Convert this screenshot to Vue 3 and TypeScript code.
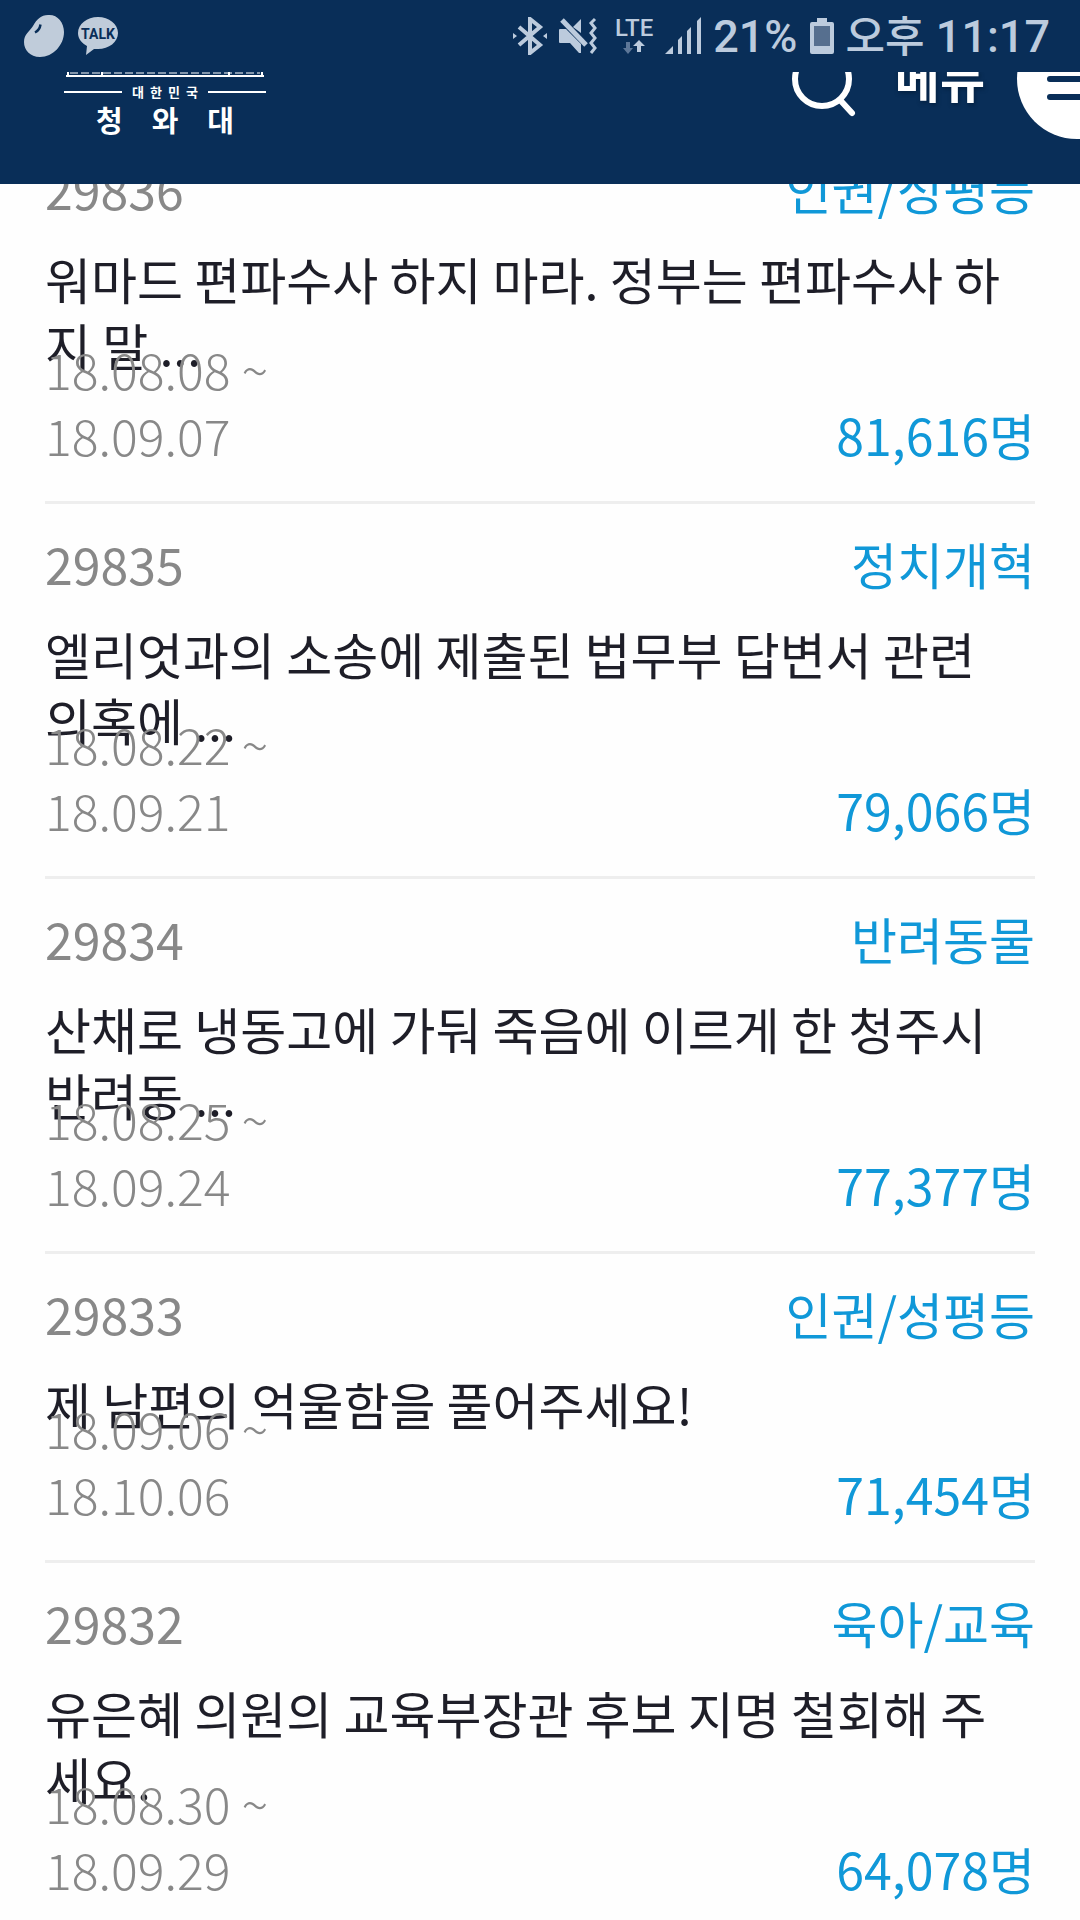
<script setup lang="ts">
interface Petition {
  id: number
  category: string
  title: string
  start: string
  end: string
  count: string
}

const petitions: Petition[] = [
  { id: 29836, category: '인권/성평등', title: '워마드 편파수사 하지 마라. 정부는 편파수사 하지 말 ...', start: '18.08.08', end: '18.09.07', count: '81,616명' },
  { id: 29835, category: '정치개혁', title: '엘리엇과의 소송에 제출된 법무부 답변서 관련 의혹에 ...', start: '18.08.22', end: '18.09.21', count: '79,066명' },
  { id: 29834, category: '반려동물', title: '산채로 냉동고에 가둬 죽음에 이르게 한 청주시 반려동 ...', start: '18.08.25', end: '18.09.24', count: '77,377명' },
  { id: 29833, category: '인권/성평등', title: '제 남편의 억울함을 풀어주세요!', start: '18.09.06', end: '18.10.06', count: '71,454명' },
  { id: 29832, category: '육아/교육', title: '유은혜 의원의 교육부장관 후보 지명 철회해 주세요.', start: '18.08.30', end: '18.09.29', count: '64,078명' },
]

const country: string[] = [...'대한민국']
const house: string[] = [...'청와대']
</script>

<template>
  <div class="page">
    <div class="status">
      <div class="status-left">
        <svg width="40" height="44" viewBox="0 0 40 44" fill="#c0ccda">
          <path d="M24 1C33 0 40 8 40 18C40 31 29 43 16 43C6 43 0 36 0 28C0 20 6 17 9 12C13 5 17 1 24 1Z" />
          <path d="M16.500 10.500C16 14 14 17 11 18.500" fill="none" stroke="#092e58" stroke-width="2.500" />
        </svg>
        <svg width="40" height="38" viewBox="0 0 40 38" fill="#c0ccda">
          <path d="M20 0C31 0 40 7 40 16C40 25 31 32 20 32L16 32L8 38L9 29C3.500 26 0 21.500 0 16C0 7 9 0 20 0Z" />
          <text x="20" y="22" text-anchor="middle" class="talk">TALK</text>
        </svg>
      </div>
      <div class="status-right">
        <svg width="34" height="38" viewBox="0 0 34 38" fill="none" stroke="#bccbdd" stroke-width="4">
          <path d="M6 10L27 28L17 36V2L27 10L6 28" />
          <path d="M0 16L4 19L0 22ZM34 16L30 19L34 22Z" fill="#bccbdd" stroke="none" />
        </svg>
        <svg width="38" height="38" viewBox="0 0 38 38">
          <path d="M1 12H7L22 27V36H20L11 26H1Q0 26 0 25V13Q0 12 1 12ZM14 10L22 2V16Z" fill="#bccbdd" />
          <path d="M3 3L27 28" stroke="#bccbdd" stroke-width="5" />
          <path d="M36 2L32 6L36 11L32 16L36 21L32 26L36 31L32 36" fill="none" stroke="#bccbdd" stroke-width="3" />
        </svg>
        <div class="lte">
          <span>LTE</span>
          <svg width="22" height="14" viewBox="0 0 22 14">
            <path d="M3 2H7V8H10L5 14L0 8H3Z" fill="#5d7798" />
            <path d="M14 12H18V6H22L16 0L10 6H14Z" fill="#bccbdd" />
          </svg>
        </div>
        <svg width="36" height="38" viewBox="0 0 36 38" fill="#bccbdd">
          <path d="M0 37L8 29V37ZM13 37V23L17 19V37ZM22 37V14L26 10V37ZM32 37V4L36 0V37Z" />
        </svg>
        <span class="battery-level">21%</span>
        <svg width="24" height="36" viewBox="0 0 24 36">
          <path d="M7 0H17V4H22Q24 4 24 6V34Q24 36 22 36H2Q0 36 0 34V6Q0 4 2 4H7Z" fill="#bccbdd" />
          <path d="M4 8H20V28H4Z" fill="#566f8f" />
        </svg>
        <span class="clock"><span class="half">오후</span> 11:17</span>
      </div>
    </div>

    <header class="bar">
      <a class="logo" href="#" aria-label="청와대">
        <svg class="roof" width="198" height="5" viewBox="0 0 198 5">
          <path d="M0 4H198" stroke="#fff" stroke-width="2" />
          <path d="M2 0V3M36 0V3M163 0V3M196 0V3" stroke="#fff" stroke-width="2" />
          <path d="M4 1H194" stroke="#fff" stroke-width="1" stroke-dasharray="8 3" />
        </svg>
        <span class="country">
          <i class="rule"></i>
          <span v-for="(c, i) in country" :key="i">{{ c }}</span>
          <i class="rule"></i>
        </span>
        <span class="house">
          <span v-for="(c, i) in house" :key="i">{{ c }}</span>
        </span>
      </a>
      <nav class="tools">
        <button type="button" class="tool" aria-label="검색">
          <svg class="search" width="68" height="68" viewBox="0 0 68 68" fill="none" stroke="#fff" stroke-width="6" stroke-linecap="round">
            <circle cx="34" cy="34" r="27" />
            <path d="M53 56L64 68" />
          </svg>
        </button>
        <button type="button" class="tool menu">
          <span class="menu-label">메뉴</span>
          <svg width="120" height="120" viewBox="0 0 120 120">
            <circle cx="60" cy="60" r="60" fill="#fff" />
            <path d="M33 42H87M33 60H87M33 78H87" stroke="#092e58" stroke-width="6" stroke-linecap="round" />
          </svg>
        </button>
      </nav>
    </header>

    <main class="content">
      <ul class="list">
        <li v-for="p in petitions" :key="p.id" class="item">
          <div class="meta">
            <span class="number">{{ p.id }}</span>
            <span class="blue">{{ p.category }}</span>
          </div>
          <a class="title" href="#">{{ p.title }}</a>
          <div class="foot">
            <span class="dates">{{ p.start }} ~ {{ p.end }}</span>
            <span class="blue">{{ p.count }}</span>
          </div>
        </li>
      </ul>
    </main>
  </div>
</template>

<style>
body {
  background: #fefefe;
}
</style>

<style scoped>
.page {
  height: 100vh;
  overflow: hidden;
  display: flex;
  flex-direction: column;
  background: #fefefe;
  font-family: "Noto Sans CJK KR", sans-serif;
}
.status,
.bar {
  flex: none;
  display: flex;
  justify-content: space-between;
  background: #092e58;
}
.status {
  height: 72px;
  padding: 0 30px 0 24px;
  align-items: center;
  color: #bccbdd;
  font: 500 45px/72px Roboto, "Noto Sans CJK KR", sans-serif;
}
.status-left,
.status-right {
  display: flex;
  align-items: center;
}
.status-left {
  gap: 14px;
}
.status-right {
  gap: 12px;
}
.clock,
.battery-level {
  padding-top: 2px;
}
.half {
  font-size: 43px;
}
.talk {
  font: 700 14px Roboto, sans-serif;
  fill: #092e58;
}
.lte {
  display: flex;
  flex-direction: column;
  align-items: center;
  gap: 3px;
  padding-left: 6px;
  font-size: 24px;
  line-height: 18px;
}
.bar {
  height: 112px;
  overflow: hidden;
  align-items: flex-start;
  padding-left: 64px;
  position: relative;
  z-index: 1;
}
.logo {
  width: 202px;
  display: flex;
  flex-direction: column;
  color: #fff;
  font-weight: 700;
  text-decoration: none;
}
.roof {
  display: block;
  align-self: center;
}
.country {
  display: flex;
  justify-content: space-between;
  align-items: center;
  margin-top: 6px;
  font-size: 13px;
  line-height: 18px;
}
.rule {
  width: 58px;
  height: 2px;
  background: #fff;
}
.country .rule:first-child {
  margin-right: 4px;
}
.country .rule:last-child {
  margin-left: 4px;
}
.house {
  display: flex;
  justify-content: space-between;
  padding: 0 32px;
  margin-top: 2px;
  font-size: 29px;
  line-height: 32px;
}
.tools {
  display: flex;
  align-items: center;
  height: 120px;
  margin: -53px -57px 0 0;
}
.tool {
  display: flex;
  align-items: center;
  padding: 0;
  border: 0;
  background: none;
  color: #fff;
  font: 700 49px/52px "Noto Sans CJK KR", sans-serif;
}
.search {
  overflow: visible;
}
.menu {
  gap: 32px;
  margin-left: 39px;
  text-shadow: 1px 2px 4px #04203f;
}
.menu-label {
  padding-bottom: 4px;
}
.content {
  flex: 1;
  min-height: 0;
  overflow: hidden;
  padding: 0 45px;
}
.list {
  list-style: none;
  margin: -58px 0 0;
  padding: 0;
}
.item {
  border-top: 3px solid #eee;
  padding: 26px 0 34px;
  font-size: 50px;
  line-height: 66px;
}
.meta,
.foot {
  display: flex;
  justify-content: space-between;
  align-items: flex-end;
}
.number {
  color: #888;
}
.blue {
  color: #1098d8;
}
.title {
  display: block;
  margin-top: 24px;
  padding-right: 12px;
  color: #1e1e28;
  text-decoration: none;
}
.foot {
  position: relative;
  margin-top: -42px;
}
.dates {
  width: 30%;
  color: #888;
  font-weight: 300;
}
</style>
